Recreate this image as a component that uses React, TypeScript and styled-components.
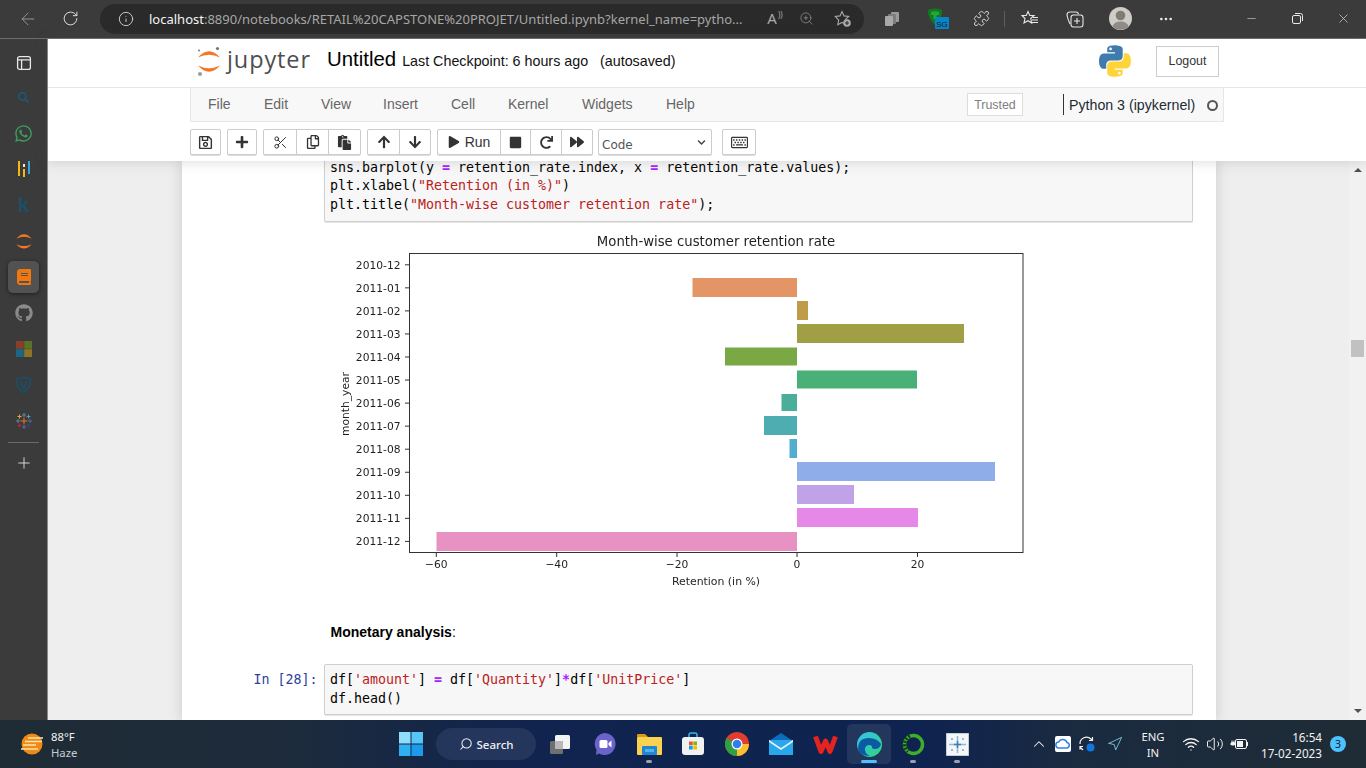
import React from "react";
import styled, { createGlobalStyle } from "styled-components";
import {
  ArrowLeft, RotateCw, Info, ZoomIn, Puzzle, Plus, Minus, X, ChevronUp, Search as SearchIcon,
  Wifi, Volume2, Navigation, MoreHorizontal, Scissors,
} from "lucide-react";
import {
  FaRegSave, FaPlus, FaRegCopy, FaPaste, FaArrowUp, FaArrowDown, FaPlay, FaStop,
  FaRedo, FaForward, FaRegKeyboard, FaWhatsapp, FaGithub, FaBook, FaSearch, FaChevronDown,
} from "react-icons/fa";

const GlobalStyle = createGlobalStyle`
  html, body { margin: 0; padding: 0; overflow: hidden; background: #3b3b3b; }
  * { box-sizing: border-box; }
`;

const Screen = styled.div`
  width: 1366px;
  height: 768px;
  display: flex;
  flex-direction: column;
  overflow: hidden;
  font-family: "Liberation Sans", Arial, sans-serif;
`;

/* browser title bar */
const TitleBar = styled.div`
  height: 39px;
  flex: none;
  display: flex;
  align-items: center;
  padding: 0 0 1px 8px;
  background: #3b3b3b;
  border-bottom: 1px solid #6e6e6e;
  color: #e8e8e8;
`;

const Slot = styled.div<{ $w?: number; $dim?: boolean }>`
  width: ${(p) => p.$w ?? 44}px;
  flex: none;
  display: flex;
  align-items: center;
  justify-content: center;
  color: ${(p) => (p.$dim ? "#9a9a9a" : "#e8e8e8")};
`;

const AddressBar = styled.div`
  width: 764px;
  height: 30px;
  flex: none;
  margin: 0 5px 0 8px;
  padding-left: 18px;
  display: flex;
  align-items: center;
  border-radius: 15px;
  background: #2a2a2a;
  color: #dcdcdc;
  svg { flex: none; }
`;

const Url = styled.div`
  width: 610px;
  flex: none;
  margin-left: 15px;
  font-family: "Noto Sans", sans-serif;
  font-size: 13px;
  white-space: nowrap;
  overflow: hidden;
  color: #a6a6a6;
  span { color: #f4f4f4; }
`;

const AddressTools = styled.div`
  display: flex;
  align-items: center;
  color: #a9a9a9;
`;

const ReadAloud = styled.span`
  width: 32px;
  font-family: "Noto Sans", sans-serif;
  font-size: 15px;
  line-height: 1;
  text-align: center;
  color: #a9a9a9;
  sup { font-size: 8px; line-height: 0; margin-left: 1px; }
`;

const BarDivider = styled.div`
  width: 1px;
  height: 16px;
  flex: none;
  margin: 0 3px 0 2px;
  background: #5f5f5f;
`;

const WindowControls = styled.div`
  margin-left: auto;
  display: flex;
`;

const Body = styled.div`
  flex: 1;
  min-height: 0;
  display: flex;
`;

/* edge side bar */
const SideBar = styled.div`
  width: 48px;
  flex: none;
  display: flex;
  flex-direction: column;
  align-items: center;
  background: #3b3b3b;
  border-right: 1px solid #8a8a8a;
`;

const SideItem = styled.div<{ $active?: boolean; $h?: number; $mt?: number }>`
  width: ${(p) => (p.$active ? 31 : 32)}px;
  height: ${(p) => p.$h ?? 36}px;
  margin-top: ${(p) => p.$mt ?? 0}px;
  flex: none;
  display: flex;
  align-items: center;
  justify-content: center;
  border-radius: 5px;
  background: ${(p) => (p.$active ? "#525252" : "transparent")};
  box-shadow: ${(p) => (p.$active ? "0 1px 4px rgba(0,0,0,.5)" : "none")};
`;

const SideRule = styled.div`
  width: 31px;
  height: 1px;
  flex: none;
  margin: 5px 0 2px;
  background: #6a6a6a;
`;

const SideLetter = styled.span`
  font-weight: 700;
  font-size: 21px;
  color: #1b4f68;
`;

/* page */
const Page = styled.div`
  flex: 1;
  min-width: 0;
  display: flex;
  flex-direction: column;
  background: #eeeeee;
`;

const HeaderWrap = styled.div`
  flex: none;
  background: #fff;
  position: relative;
  z-index: 2;
  box-shadow: 0 0 12px 1px rgba(87, 87, 87, 0.2);
  display: flex;
  flex-direction: column;
`;

const TopRow = styled.div`
  height: 49px;
  padding-bottom: 4px;
  border-bottom: 1px solid #e7e7e7;
  display: flex;
  justify-content: center;
`;

const TopInner = styled.div`
  width: 1034px;
  display: flex;
  align-items: center;
  padding: 0 5px 0 6px;
`;

const LogoWord = styled.span`
  margin-left: 5px;
  padding-bottom: 3px;
  font-family: "Open Sans", sans-serif;
  font-size: 23.5px;
  letter-spacing: 0.9px;
  color: #4e4e4e;
  line-height: 1;
`;

const NotebookName = styled.span`
  margin-left: 16px;
  padding-bottom: 4px;
  font-size: 20.4px;
  color: #000;
`;

const Checkpoint = styled.span`
  margin-left: 6px;
  font-size: 14.3px;
  color: #111;
  white-space: pre;
`;

const PythonWrap = styled.div`
  margin-left: auto;
  display: flex;
`;

const LogoutButton = styled.div`
  width: 63px;
  height: 31px;
  margin-left: 25px;
  display: flex;
  align-items: center;
  justify-content: center;
  border: 1px solid #ccc;
  font-size: 12.4px;
  color: #333;
`;

const MenuRow = styled.div`
  display: flex;
  justify-content: center;
`;

const MenuBar = styled.div`
  width: 1034px;
  height: 34px;
  display: flex;
  align-items: center;
  padding: 0 0 1px 17px;
  background: #f8f8f8;
  border: 1px solid #e7e7e7;
  border-top: 0;
`;

const MenuItem = styled.span<{ $w: number }>`
  width: ${(p) => p.$w}px;
  flex: none;
  font-size: 14px;
  color: #666;
`;

const TrustedBadge = styled.div`
  width: 56px;
  height: 23px;
  margin: 1px 0 0 301px;
  display: flex;
  align-items: center;
  justify-content: center;
  background: #fff;
  border: 1px solid #ddd;
  font-size: 12.4px;
  color: #808080;
`;

const KernelName = styled.div`
  margin: 1px 0 0 40px;
  height: 21px;
  padding-left: 5px;
  display: flex;
  align-items: center;
  border-left: 1px solid #333;
  font-size: 14.2px;
  color: #1d2b33;
  white-space: nowrap;
`;

const KernelDot = styled.div`
  width: 11px;
  height: 11px;
  margin: 2px 0 0 12px;
  flex: none;
  border: 2px solid #555;
  border-radius: 50%;
`;

const ToolRow = styled.div`
  display: flex;
  justify-content: center;
  padding: 7px 0 6px;
`;

const ToolInner = styled.div`
  width: 1034px;
  display: flex;
  align-items: stretch;
  height: 26px;
`;

const ToolGroup = styled.div<{ $ml?: number }>`
  margin-left: ${(p) => p.$ml ?? 6}px;
  display: flex;
  border: 1px solid #ccc;
  border-radius: 2px;
  background: #fff;
  box-shadow: 0 1px 0 #ddd;
`;

const ToolButton = styled.div<{ $w: number }>`
  width: ${(p) => p.$w}px;
  flex: none;
  display: flex;
  align-items: center;
  justify-content: center;
  gap: 5px;
  font-size: 14px;
  color: #333;
  & + & { border-left: 1px solid #ccc; }
`;

const CellType = styled.div`
  width: 114px;
  margin-left: 5px;
  padding: 6px 5px 0 3px;
  display: flex;
  align-items: center;
  justify-content: space-between;
  background: #fff;
  border: 1px solid #ccc;
  border-radius: 2px;
  box-shadow: 0 1px 0 #ddd;
  font-family: "DejaVu Sans", sans-serif;
  font-size: 12px;
  color: #555;
  svg { margin-top: -6px; }
`;

/* notebook */
const Scroller = styled.div`
  flex: 1;
  min-height: 0;
  display: flex;
`;

const Site = styled.div`
  flex: 1;
  min-width: 0;
  display: flex;
  justify-content: center;
  overflow: hidden;
`;

const NotebookPanel = styled.div`
  width: 1034px;
  padding-right: 23px;
  background: #fff;
  box-shadow: 0 0 12px 1px rgba(87, 87, 87, 0.2);
  display: flex;
  flex-direction: column;
`;

const CodeRow = styled.div<{ $mt?: number }>`
  flex: none;
  display: flex;
  margin-top: ${(p) => p.$mt ?? 0}px;
`;

const Prompt = styled.div`
  width: 142px;
  flex: none;
  padding: 7px 6px 0 0;
  text-align: right;
  font-family: "DejaVu Sans Mono", monospace;
  font-size: 13.3px;
  line-height: 18.7px;
  color: #303f9f;
`;

const CodeBox = styled.div<{ $open?: boolean }>`
  flex: 1;
  padding: ${(p) => (p.$open ? "0" : "6px")} 5px ${(p) => (p.$open ? 6 : 5)}px 5.4px;
  background: #f7f7f7;
  border: 1px solid #cfcfcf;
  border-top-width: ${(p) => (p.$open ? 0 : 1)}px;
  border-radius: 2px;
  box-shadow: 0 1px 0 #e6e6e6;
  font-family: "DejaVu Sans Mono", monospace;
  font-size: 13.3px;
  line-height: 18.7px;
  color: #000;
  white-space: pre;
`;

const Str = styled.span`
  color: #ba2121;
`;

const Op = styled.span`
  color: #aa22ff;
  font-weight: 700;
`;

const ChartRow = styled.div`
  flex: none;
  margin: 3.5px 0 0 142px;
`;

const ChartSvg = styled.svg`
  display: block;
  filter: blur(0.4px);
`;

const Markdown = styled.div`
  flex: none;
  margin: 27px 0 22px 149px;
  font-size: 14px;
  line-height: 20px;
  color: #000;
`;

const ScrollTrack = styled.div`
  width: 17px;
  flex: none;
  display: flex;
  flex-direction: column;
  align-items: center;
  background: #f1f1f1;
`;

const ArrowUpGlyph = styled.div`
  margin-top: 7px;
  border-left: 4px solid transparent;
  border-right: 4px solid transparent;
  border-bottom: 4px solid #505050;
`;

const ArrowDownGlyph = styled.div`
  margin-top: auto;
  margin-bottom: 7px;
  border-left: 4px solid transparent;
  border-right: 4px solid transparent;
  border-top: 4px solid #505050;
`;

const Thumb = styled.div`
  width: 13px;
  height: 17px;
  margin-top: 168px;
  background: #c1c1c1;
`;

/* windows task bar */
const TaskBar = styled.div`
  height: 48px;
  flex: none;
  display: flex;
  align-items: center;
  background: linear-gradient(90deg, #1f2c35 0%, #1d2b3b 20%, #10244f 40%, #0f2350 68%, #1a2a40 78%, #1f2c35 100%);
  color: #f2f2f2;
`;

const Weather = styled.div`
  width: 389px;
  flex: none;
  display: flex;
  align-items: center;
  padding-left: 20px;
  gap: 7px;
`;

const WeatherText = styled.div`
  padding-top: 1px;
  font-family: "Noto Sans", sans-serif;
  font-size: 11.3px;
  line-height: 16px;
  color: #f2f2f2;
  small { display: block; font-size: 11.3px; color: #c8ccd0; }
`;

const SearchPill = styled.div`
  width: 100px;
  height: 32px;
  flex: none;
  margin: 0 3px;
  display: flex;
  align-items: center;
  justify-content: center;
  gap: 4px;
  border-radius: 16px;
  background: #24365c;
  font-family: "Noto Sans", sans-serif;
  font-weight: 500;
  font-size: 11.5px;
  color: #f0f0f0;
  svg { transform: scaleX(-1); }
`;

const TaskIcon = styled.div<{ $dot?: boolean; $active?: boolean }>`
  position: relative;
  width: 44px;
  height: 40px;
  flex: none;
  display: flex;
  align-items: center;
  justify-content: center;
  border-radius: 5px;
  background: ${(p) => (p.$active ? "#23365c" : "transparent")};
  &::after {
    content: "";
    display: ${(p) => (p.$dot || p.$active ? "block" : "none")};
    position: absolute;
    bottom: 1px;
    left: 50%;
    transform: translateX(-50%);
    width: ${(p) => (p.$active ? 16 : 6)}px;
    height: 3px;
    border-radius: 2px;
    background: ${(p) => (p.$active ? "#4cc2ff" : "#9aa3ad")};
  }
`;

const Tray = styled.div`
  margin-left: auto;
  padding-right: 20px;
  display: flex;
  align-items: center;
`;

const TrayItem = styled.div<{ $w?: number; $ml?: number }>`
  width: ${(p) => p.$w ?? 24}px;
  margin-left: ${(p) => p.$ml ?? 0}px;
  flex: none;
  display: flex;
  align-items: center;
  justify-content: center;
  color: #f2f2f2;
`;

const LangText = styled.div`
  padding-top: 1px;
  font-family: "Noto Sans", sans-serif;
  font-size: 11.3px;
  line-height: 16px;
  text-align: center;
  color: #f2f2f2;
`;

const Clock = styled.div`
  width: 71px;
  flex: none;
  padding-top: 1px;
  text-align: right;
  font-family: "Noto Sans", sans-serif;
  font-size: 11.7px;
  line-height: 16px;
  color: #f2f2f2;
`;

const CountBadge = styled.div`
  width: 16px;
  height: 16px;
  margin-left: 8px;
  flex: none;
  display: flex;
  align-items: center;
  justify-content: center;
  border-radius: 50%;
  background: #4cc2ff;
  font-family: "Noto Sans", sans-serif;
  font-size: 10.5px;
  color: #10202c;
`;

/* drawings */
const JupyterLogo = ({ size = 26, dots = true }: { size?: number; dots?: boolean }) => (
  <svg width={size} height={size * (32 / 26)} viewBox="195 44 26 32">
    <path d="M197 56.5Q208 44 219 56.5Q208 51 197 56.5Z" fill="#f37726" />
    <path d="M197 64.5Q208 77 219 64.5Q208 70 197 64.5Z" fill="#f37726" />
    {dots && <circle cx="216.5" cy="47.5" r="1.6" fill="#767677" />}
    {dots && <circle cx="198" cy="49.5" r="1" fill="#767677" />}
    {dots && <circle cx="199" cy="73" r="2.1" fill="#9e9e9e" />}
  </svg>
);

const PythonLogo = () => (
  <svg width="32" height="32" viewBox="0 0 111 110">
    <path fill="#3f7cad" d="M54.9 0c-28 0-26.3 12.2-26.3 12.2v12.6h26.7v3.8H18s-18-2-18 26.3 15.7 27.3 15.7 27.3h9.4V68.9s-.5-15.7 15.5-15.7h26.6s15 .2 15-14.5V14.5S84.5 0 54.9 0zM40.1 8.5a4.8 4.8 0 110 9.6 4.8 4.8 0 010-9.6z" />
    <path fill="#ffd43b" d="M55.7 110c28 0 26.3-12.2 26.3-12.2V85.2H55.3v-3.8h37.4s18 2 18-26.3S95 27.8 95 27.8h-9.4v13.3s.5 15.7-15.5 15.7H43.5s-15-.2-15 14.5v24.2S26.1 110 55.7 110zm14.8-8.5a4.8 4.8 0 110-9.6 4.8 4.8 0 010 9.6z" />
  </svg>
);

const TabsIcon = () => (
  <svg width="16" height="16" viewBox="0 0 16 16" fill="none" stroke="#e8e8e8" strokeWidth="1.3">
    <rect x="1.6" y="1.6" width="12.8" height="12.8" rx="2" />
    <path d="M1.6 4.8H14.4M5.6 4.8V14.4" />
  </svg>
);

const BarsIcon = () => (
  <svg width="16" height="16" viewBox="0 0 16 16">
    <rect x="2" y="0" width="2" height="15" fill="#f5b915" />
    <rect x="7" y="3" width="2" height="3" fill="#e8e8e8" />
    <rect x="7" y="8" width="2" height="8" fill="#f5b915" />
    <rect x="12" y="0" width="2" height="13" fill="#37a2d6" />
  </svg>
);

const MsIcon = () => (
  <svg width="16" height="16" viewBox="0 0 16 16">
    <rect width="7.8" height="7.8" fill="#8a3d2b" />
    <rect x="8.2" width="7.8" height="7.8" fill="#5b7327" />
    <rect y="8.2" width="7.8" height="7.8" fill="#1c6687" />
    <rect x="8.2" y="8.2" width="7.8" height="7.8" fill="#8e7426" />
  </svg>
);

const ShieldIcon = () => (
  <svg width="17" height="18" viewBox="0 0 16 16" fill="none" stroke="#1b4f68" strokeWidth="1.6">
    <path d="M1.5 2.5Q8 -.5 14.5 2.5Q15 10 8 15Q1 10 1.5 2.5Z" />
    <path d="M5 4.5L8 11L11 4.5" />
  </svg>
);

const TableauIcon = () => {
  const crosses = [
    [8, 8, 3.4, "#e8762b"], [8, 2, 2, "#5b87a8"], [8, 14, 2, "#5b6aa8"], [2, 8, 2, "#4f8aa8"],
    [14, 8, 2, "#5566a0"], [3.5, 3.5, 2, "#e8a33d"], [12.5, 3.5, 2, "#5b9bb5"],
    [3.5, 12.5, 2, "#c72035"], [12.5, 12.5, 2, "#1f4f7a"],
  ] as const;
  return (
    <svg width="16" height="16" viewBox="0 0 16 16" strokeWidth="1">
      {crosses.map(([x, y, r, c], i) => (
        <path key={i} stroke={c} d={`M${x - r} ${y}H${x + r}M${x} ${y - r}V${y + r}`} />
      ))}
    </svg>
  );
};

const StarPlusIcon = () => (
  <svg width="18" height="18" viewBox="0 0 18 18" fill="none" stroke="#a9a9a9" strokeWidth="1.1">
    <path d="M8 1.5l2 4.4 4.7.5-3.4 3.2.9 4.6L8 12.4l-4.2 2.3.9-4.6L1.3 6.4 6 5.9z" />
    <circle cx="13" cy="13" r="3.8" fill="#a9a9a9" stroke="none" />
    <path d="M13 11v4M11 13h4" stroke="#2a2a2a" />
  </svg>
);

const CollectionsDim = () => (
  <svg width="16" height="16" viewBox="0 0 16 16">
    <rect x="7" y="1" width="8" height="10" rx="1" fill="#9a9a9a" />
    <rect x="4" y="3" width="8" height="10" rx="1" fill="#7d7d7d" />
    <rect x="1" y="5" width="8" height="10" rx="1" fill="#a8a8a8" />
  </svg>
);

const ExtensionBadge = () => (
  <svg width="22" height="24" viewBox="0 0 22 24">
    <path d="M1 3Q8 0 15 3Q15.5 11 8 18Q.5 11 1 3Z" fill="#0f7d1e" />
    <path d="M4 5Q8 3.5 12 5V8H9.5V12H6.5V8H4Z" fill="#35c24a" opacity=".6" />
    <rect x="8" y="10" width="14" height="12" rx="1" fill="#0a84c6" />
    <text x="15" y="19.5" textAnchor="middle" fontFamily="Liberation Sans" fontSize="8" fill="#10202c">SG</text>
  </svg>
);

const FavoritesIcon = () => (
  <svg width="18" height="18" viewBox="0 0 18 18" fill="none" stroke="#e8e8e8" strokeWidth="1.1">
    <path d="M7 1.5l1.8 4H13L9.7 8.5 10.7 13 7 10.7 3 13l1-4.5L1 5.5h4.3z" />
    <path d="M12 7.5h5M11 10h6M10 12.5h7" />
  </svg>
);

const CollectionsIcon = () => (
  <svg width="18" height="18" viewBox="0 0 18 18" fill="none" stroke="#e8e8e8" strokeWidth="1.1">
    <path d="M4 14Q1.5 9 1 5q0-3 3-3h6q2 0 2.5 2" />
    <rect x="5" y="5" width="12" height="12" rx="2.5" />
    <path d="M11 8v6M8 11h6" />
  </svg>
);

const Avatar = () => (
  <svg width="23" height="23" viewBox="0 0 23 23">
    <circle cx="11.5" cy="11.5" r="11.5" fill="#cfcbc5" />
    <circle cx="11.5" cy="8.5" r="4.8" fill="#7f7b76" />
    <path d="M3.5 19.5Q5 14.5 11.5 14.5T19.5 19.5A11.5 11.5 0 013.5 19.5Z" fill="#8f8b86" />
  </svg>
);

const Restore = () => (
  <svg width="11" height="11" viewBox="0 0 11 11" fill="none" stroke="#e8e8e8">
    <rect x=".5" y="2.5" width="8" height="8" rx="1.5" />
    <path d="M3 .5h5.5a2 2 0 012 2V8" />
  </svg>
);

const HazeSun = () => (
  <svg width="24" height="24" viewBox="0 0 24 24">
    <circle cx="12" cy="12" r="10.5" fill="#f18a12" />
    <path d="M8 6H23M5 9.5H22M3 13H16M1 17H18" stroke="#f8e3b4" strokeWidth="1.5" />
  </svg>
);

const WinLogo = () => (
  <svg width="24" height="24" viewBox="0 0 24 24">
    <rect width="11.5" height="11.5" fill="#8fdcfb" />
    <rect x="12.5" width="11.5" height="11.5" fill="#55c6f7" />
    <rect y="12.5" width="11.5" height="11.5" fill="#2fb0f0" />
    <rect x="12.5" y="12.5" width="11.5" height="11.5" fill="#1a9bec" />
  </svg>
);

const TaskViewIcon = () => (
  <svg width="24" height="24" viewBox="0 0 24 24">
    <rect x="1" y="9" width="13" height="13" rx="1.5" fill="#6f6f6f" />
    <rect x="6" y="3" width="15" height="14" rx="1.5" fill="#f4f4f4" />
    <rect x="6" y="9" width="8" height="8" fill="#b9b9b9" />
  </svg>
);

const MeetIcon = () => (
  <svg width="24" height="24" viewBox="0 0 24 24">
    <path d="M12 1a11 11 0 11-6 20.5L3 23l.5-5A11 11 0 0112 1z" fill="#6a63c9" />
    <rect x="6.5" y="8" width="8" height="8" rx="1.5" fill="#fff" />
    <path d="M15.5 11l3-2.5v7l-3-2.5z" fill="#fff" />
  </svg>
);

const FolderIcon = () => (
  <svg width="25" height="24" viewBox="0 0 25 24">
    <path d="M0 3a1 1 0 011-1h7l3 3H0z" fill="#d99a15" />
    <rect y="5" width="25" height="18" rx="1" fill="#fbd24f" />
    <rect x="5" y="14" width="15" height="9" rx="1" fill="#1f86d6" />
    <rect x="8" y="17" width="9" height="3" fill="#4fb4ee" />
  </svg>
);

const StoreIcon = () => (
  <svg width="24" height="24" viewBox="0 0 24 24">
    <path d="M8 6V3a2 2 0 012-2h4a2 2 0 012 2v3" fill="none" stroke="#35b4ee" strokeWidth="1.5" />
    <rect x="1" y="5" width="22" height="18" rx="3" fill="#f1f1f1" />
    <rect x="8" y="9.5" width="3.7" height="3.7" fill="#f25022" />
    <rect x="12.3" y="9.5" width="3.7" height="3.7" fill="#7fba00" />
    <rect x="8" y="13.8" width="3.7" height="3.7" fill="#00a4ef" />
    <rect x="12.3" y="13.8" width="3.7" height="3.7" fill="#ffb900" />
  </svg>
);

const ChromeIcon = () => (
  <svg width="24" height="24" viewBox="0 0 24 24">
    <circle cx="12" cy="12" r="12" fill="#e33b2e" />
    <path d="M12 12L1.6 6A12 12 0 0012 24l5-8z" fill="#2f9e44" />
    <path d="M12 12h12A12 12 0 0112 24z" fill="#fbc02d" />
    <circle cx="12" cy="12" r="5.5" fill="#fff" />
    <circle cx="12" cy="12" r="4.3" fill="#2f7ff0" />
  </svg>
);

const MailIcon = () => (
  <svg width="24" height="22" viewBox="0 0 24 22">
    <path d="M0 8L12 0l12 8z" fill="#0f6cbd" />
    <rect y="7" width="24" height="15" fill="#28a8ea" />
    <path d="M0 7l12 8 12-8v2L12 17 0 9z" fill="#e8f4fc" />
  </svg>
);

const WpsIcon = () => (
  <svg width="25" height="20" viewBox="0 0 25 20">
    <path d="M2.5 2.5l5.5 15L12.5 7l4.5 10.5 5.5-15" fill="none" stroke="#e5231f" strokeWidth="5" strokeLinejoin="round" />
  </svg>
);

const EdgeIcon = () => (
  <svg width="25" height="25" viewBox="0 0 25 25">
    <defs>
      <linearGradient id="edgeA" x1="0" y1="0" x2="1" y2="1">
        <stop offset="0" stopColor="#35c1f1" />
        <stop offset="1" stopColor="#2fd67a" />
      </linearGradient>
    </defs>
    <circle cx="12.5" cy="12.5" r="12.5" fill="url(#edgeA)" />
    <path d="M1 17Q1 6 12 6q8 0 12 6-1 5-6 5-4 0-3-3-5-3-7 2-1 5 5 8Q2 24 1 17z" fill="#0c59a4" />
  </svg>
);

const RingIcon = () => (
  <svg width="23" height="23" viewBox="0 0 23 23" fill="none" strokeWidth="3.5">
    <circle cx="11.5" cy="11.5" r="9" stroke="#3fae2a" />
    <path d="M8 3A9 9 0 006 18.5" stroke="#153f12" strokeDasharray="2 1.5" />
  </svg>
);

const TableauTile = () => (
  <svg width="23" height="23" viewBox="0 0 23 23">
    <rect width="23" height="23" fill="#f4f6f8" stroke="#9aa5b1" />
    <path d="M11.5 3v17M3 11.5h17M5 6h2M6 5v2M17 5v2M16 6h2M5 17h2M6 16v2M16 17h2M17 16v2" stroke="#8fb7d6" strokeWidth="1.5" />
    <path d="M11.5 8v7M8 11.5h7" stroke="#3d7fb5" strokeWidth="1.5" />
  </svg>
);

const DriveTile = () => (
  <svg width="16" height="16" viewBox="0 0 16 16">
    <rect width="16" height="16" rx="2" fill="#fff" />
    <path d="M4 12a3 3 0 01-.3-6A4.5 4.5 0 0112 6.5 2.8 2.8 0 0112 12z" fill="none" stroke="#2f80ed" strokeWidth="1.5" />
  </svg>
);

const SyncIcon = () => (
  <svg width="18" height="18" viewBox="0 0 18 18" fill="none" stroke="#f2f2f2" strokeWidth="1.2">
    <path d="M2 9a6.5 6.5 0 0111-5l1.5 1.5M14.500 2v3.500H11" />
    <path d="M2.5 12.5L5 15M5 11.5H2v3" />
    <circle cx="12.5" cy="12.5" r="4" fill="#0f78e0" stroke="none" />
  </svg>
);

const BatteryIcon = () => (
  <svg width="18" height="14" viewBox="0 0 18 14">
    <rect x="5.5" y="2.5" width="11" height="9" rx="1.5" fill="none" stroke="#f2f2f2" />
    <rect x="7" y="4" width="6" height="6" fill="#f2f2f2" />
    <rect x="17" y="5" width="1" height="4" fill="#f2f2f2" />
    <path d="M0 7h5M2 3.5v2M4 3.5v2M1.5 5.5H4.5V8H1.5z" stroke="#f2f2f2" fill="#f2f2f2" />
  </svg>
);

const ticksY = ["2010-12", "2011-01", "2011-02", "2011-03", "2011-04", "2011-05", "2011-06", "2011-07", "2011-08", "2011-09", "2011-10", "2011-11", "2011-12"];

const bars = [
  { x0: 692.5, x1: 797, y0: 278, y1: 297, c: "#e39565" },
  { x0: 797, x1: 808, y0: 301, y1: 320, c: "#c09b4a" },
  { x0: 797, x1: 964, y0: 324, y1: 343, c: "#a09f45" },
  { x0: 725, x1: 797, y0: 347.5, y1: 365.5, c: "#7aa845" },
  { x0: 797, x1: 917, y0: 370.5, y1: 388.5, c: "#49b077" },
  { x0: 781.5, x1: 797, y0: 394, y1: 411, c: "#4aae9b" },
  { x0: 764, x1: 797, y0: 416, y1: 435, c: "#4dadb0" },
  { x0: 789.5, x1: 797, y0: 439, y1: 458, c: "#52aecf" },
  { x0: 797, x1: 995, y0: 462, y1: 481, c: "#8fade8" },
  { x0: 797, x1: 854, y0: 485, y1: 504, c: "#c0a2e9" },
  { x0: 797, x1: 918, y0: 508, y1: 527, c: "#e588e8" },
  { x0: 436.5, x1: 797, y0: 532, y1: 551, c: "#e891c3" },
];

const ticksX = [
  { x: 436.3, t: "−60" },
  { x: 556.7, t: "−40" },
  { x: 677, t: "−20" },
  { x: 797, t: "0" },
  { x: 917.5, t: "20" },
];

const RetentionChart = () => (
  // viewBox uses page coordinates so the bars read straight off the plot
  <ChartSvg width="720" height="370" viewBox="324 225 720 370" fontFamily="DejaVu Sans" fontSize="10.7" fill="#1f1f1f">
    <text x="716" y="245.5" textAnchor="middle" fontSize="13.25">Month-wise customer retention rate</text>
    {bars.map((b) => (
      <rect key={b.y0} x={b.x0} y={b.y0} width={b.x1 - b.x0} height={b.y1 - b.y0} fill={b.c} />
    ))}
    <rect x="409.5" y="253.5" width="613.5" height="299" fill="none" stroke="#333" strokeWidth="1" />
    {ticksY.map((t, i) => {
      const y = 264.8 + i * 23.05;
      return (
        <g key={t}>
          <path d={`M405 ${y}H409.5`} stroke="#333" />
          <text x="400.5" y={y + 4} textAnchor="end">{t}</text>
        </g>
      );
    })}
    {ticksX.map((t) => (
      <g key={t.t}>
        <path d={`M${t.x} 552.5V557`} stroke="#333" />
        <text x={t.x} y="568" textAnchor="middle">{t.t}</text>
      </g>
    ))}
    <text x="716" y="585" textAnchor="middle" fontSize="10.9">Retention (in %)</text>
    <text transform="translate(349 404) rotate(-90)" textAnchor="middle">month_year</text>
  </ChartSvg>
);

const App = () => (
  <Screen>
    <GlobalStyle />
    <TitleBar>
      <Slot $w={40} $dim><ArrowLeft size={20} strokeWidth={1.1} /></Slot>
      <Slot $w={44}><RotateCw size={17} strokeWidth={1.3} /></Slot>
      <AddressBar>
        <Info size={16} strokeWidth={1.3} />
        <Url><span>localhost</span>:8890/notebooks/RETAIL%20CAPSTONE%20PROJET/Untitled.ipynb?kernel_name=pytho...</Url>
        <AddressTools>
          <ReadAloud>A<sup>))</sup></ReadAloud>
          <Slot $w={30} $dim><ZoomIn size={15} strokeWidth={1.1} /></Slot>
          <Slot $w={44} $dim><StarPlusIcon /></Slot>
        </AddressTools>
      </AddressBar>
      <Slot $w={46} $dim><CollectionsDim /></Slot>
      <Slot $w={46}><ExtensionBadge /></Slot>
      <Slot $w={41}><Puzzle size={17} strokeWidth={1.2} /></Slot>
      <BarDivider />
      <Slot $w={44}><FavoritesIcon /></Slot>
      <Slot $w={45}><CollectionsIcon /></Slot>
      <Slot $w={47}><Avatar /></Slot>
      <Slot $w={44}><MoreHorizontal size={16} strokeWidth={2} /></Slot>
      <WindowControls>
        <Slot $w={46}><Minus size={13} strokeWidth={1} /></Slot>
        <Slot $w={46}><Restore /></Slot>
        <Slot $w={46}><X size={15} strokeWidth={1} /></Slot>
      </WindowControls>
    </TitleBar>

    <Body>
      <SideBar>
        <SideItem $h={48}><TabsIcon /></SideItem>
        <SideItem $h={20}><FaSearch size={11} color="#1c5872" /></SideItem>
        <SideItem $h={52}><FaWhatsapp size={19} color="#3d9e5e" /></SideItem>
        <SideItem $h={20}><BarsIcon /></SideItem>
        <SideItem $h={52}><SideLetter>k</SideLetter></SideItem>
        <SideItem $h={20}><JupyterLogo size={18} dots={false} /></SideItem>
        <SideItem $active $h={32} $mt={10}><FaBook size={16} color="#f0780f" /></SideItem>
        <SideItem $h={40}><FaGithub size={18} color="#8a8a8a" /></SideItem>
        <SideItem $h={32}><MsIcon /></SideItem>
        <SideItem $h={40}><ShieldIcon /></SideItem>
        <SideItem $h={32}><TableauIcon /></SideItem>
        <SideRule />
        <SideItem $h={36}><Plus size={18} strokeWidth={1.1} color="#f0f0f0" /></SideItem>
      </SideBar>

      <Page>
        <HeaderWrap>
          <TopRow>
            <TopInner>
              <JupyterLogo />
              <LogoWord>jupyter</LogoWord>
              <NotebookName>Untitled</NotebookName>
              <Checkpoint>Last Checkpoint: 6 hours ago   (autosaved)</Checkpoint>
              <PythonWrap><PythonLogo /></PythonWrap>
              <LogoutButton>Logout</LogoutButton>
            </TopInner>
          </TopRow>
          <MenuRow>
            <MenuBar>
              <MenuItem $w={56}>File</MenuItem>
              <MenuItem $w={57}>Edit</MenuItem>
              <MenuItem $w={62}>View</MenuItem>
              <MenuItem $w={68}>Insert</MenuItem>
              <MenuItem $w={57}>Cell</MenuItem>
              <MenuItem $w={74}>Kernel</MenuItem>
              <MenuItem $w={84}>Widgets</MenuItem>
              <MenuItem $w={0}>Help</MenuItem>
              <TrustedBadge>Trusted</TrustedBadge>
              <KernelName>Python 3 (ipykernel)</KernelName>
              <KernelDot />
            </MenuBar>
          </MenuRow>
          <ToolRow>
            <ToolInner>
              <ToolGroup $ml={0}><ToolButton $w={29}><FaRegSave size={15} /></ToolButton></ToolGroup>
              <ToolGroup><ToolButton $w={28}><FaPlus size={14} /></ToolButton></ToolGroup>
              <ToolGroup>
                <ToolButton $w={32}><Scissors size={15} strokeWidth={1.6} /></ToolButton>
                <ToolButton $w={32}><FaRegCopy size={14} /></ToolButton>
                <ToolButton $w={32}><FaPaste size={15} /></ToolButton>
              </ToolGroup>
              <ToolGroup>
                <ToolButton $w={31}><FaArrowUp size={14} /></ToolButton>
                <ToolButton $w={31}><FaArrowDown size={14} /></ToolButton>
              </ToolGroup>
              <ToolGroup>
                <ToolButton $w={62}><FaPlay size={12} />Run</ToolButton>
                <ToolButton $w={30}><FaStop size={13} /></ToolButton>
                <ToolButton $w={31}><FaRedo size={13} /></ToolButton>
                <ToolButton $w={31}><FaForward size={14} /></ToolButton>
              </ToolGroup>
              <CellType>Code<FaChevronDown size={9} color="#444" /></CellType>
              <ToolGroup $ml={10}><ToolButton $w={32}><FaRegKeyboard size={17} /></ToolButton></ToolGroup>
            </ToolInner>
          </ToolRow>
        </HeaderWrap>

        <Scroller>
          <Site>
            <NotebookPanel>
              <CodeRow $mt={-2.5}>
                <Prompt />
                <CodeBox $open>
                  <div>sns.barplot(y <Op>=</Op> retention_rate.index, x <Op>=</Op> retention_rate.values);</div>
                  <div>plt.xlabel(<Str>"Retention (in %)"</Str>)</div>
                  <div>plt.title(<Str>"Month-wise customer retention rate"</Str>);</div>
                </CodeBox>
              </CodeRow>
              <ChartRow><RetentionChart /></ChartRow>
              <Markdown><strong>Monetary analysis</strong>:</Markdown>
              <CodeRow>
                <Prompt>In [28]:</Prompt>
                <CodeBox>
                  <div>df[<Str>'amount'</Str>] <Op>=</Op> df[<Str>'Quantity'</Str>]<Op>*</Op>df[<Str>'UnitPrice'</Str>]</div>
                  <div>df.head()</div>
                </CodeBox>
              </CodeRow>
            </NotebookPanel>
          </Site>
          <ScrollTrack>
            <ArrowUpGlyph />
            <Thumb />
            <ArrowDownGlyph />
          </ScrollTrack>
        </Scroller>
      </Page>
    </Body>

    <TaskBar>
      <Weather>
        <HazeSun />
        <WeatherText>88°F<small>Haze</small></WeatherText>
      </Weather>
      <TaskIcon><WinLogo /></TaskIcon>
      <SearchPill><SearchIcon size={14} strokeWidth={1.8} />Search</SearchPill>
      <TaskIcon><TaskViewIcon /></TaskIcon>
      <TaskIcon><MeetIcon /></TaskIcon>
      <TaskIcon $dot><FolderIcon /></TaskIcon>
      <TaskIcon><StoreIcon /></TaskIcon>
      <TaskIcon><ChromeIcon /></TaskIcon>
      <TaskIcon><MailIcon /></TaskIcon>
      <TaskIcon><WpsIcon /></TaskIcon>
      <TaskIcon $active><EdgeIcon /></TaskIcon>
      <TaskIcon $dot><RingIcon /></TaskIcon>
      <TaskIcon $dot><TableauTile /></TaskIcon>
      <Tray>
        <TrayItem><ChevronUp size={18} strokeWidth={1.4} /></TrayItem>
        <TrayItem><DriveTile /></TrayItem>
        <TrayItem><SyncIcon /></TrayItem>
        <TrayItem $ml={4}><Navigation size={16} strokeWidth={1.3} color="#7fd0e0" /></TrayItem>
        <TrayItem $w={40} $ml={6}><LangText>ENG<br />IN</LangText></TrayItem>
        <TrayItem $ml={6}><Wifi size={18} strokeWidth={1.7} /></TrayItem>
        <TrayItem><Volume2 size={18} strokeWidth={1.3} /></TrayItem>
        <TrayItem><BatteryIcon /></TrayItem>
        <Clock>16:54<br />17-02-2023</Clock>
        <CountBadge>3</CountBadge>
      </Tray>
    </TaskBar>
  </Screen>
);

export default App;
